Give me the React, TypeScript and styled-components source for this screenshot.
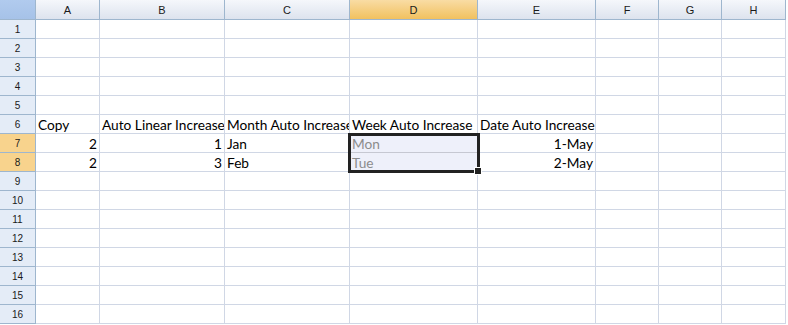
import React from "react";
import styled, { createGlobalStyle, css } from "styled-components";

const Global = createGlobalStyle`
  html, body { margin: 0; padding: 0; background: #fff; }
  body { width: 788px; height: 325px; overflow: hidden; }
`;

const COLS = [64, 125, 125, 128, 118, 63, 63, 64];
const LETTERS = ["A", "B", "C", "D", "E", "F", "G", "H"];
const ROWS = 16;
const SEL_COL = 3;
const SEL_ROWS = [7, 8];

type Cell = { t: string; right?: boolean; muted?: boolean };
const DATA: Record<number, (Cell | null)[]> = {
  6: [
    { t: "Copy" },
    { t: "Auto Linear Increase" },
    { t: "Month Auto Increase" },
    { t: "Week Auto Increase" },
    { t: "Date Auto Increase" },
  ],
  7: [
    { t: "2", right: true },
    { t: "1", right: true },
    { t: "Jan" },
    { t: "Mon", muted: true },
    { t: "1-May", right: true },
  ],
  8: [
    { t: "2", right: true },
    { t: "3", right: true },
    { t: "Feb" },
    { t: "Tue", muted: true },
    { t: "2-May", right: true },
  ],
};

const Sheet = styled.div`
  position: relative;
  display: grid;
  grid-template-columns: 36px ${COLS.map((c) => `${c}px`).join(" ")};
  grid-template-rows: 20px repeat(${ROWS}, 19px);
  width: max-content;
`;

const Corner = styled.div`
  box-sizing: border-box;
  background: linear-gradient(#b1cbee, #a6c2e8);
  border-right: 1px solid #9eb6ce;
  border-bottom: 1px solid #9eb6ce;
`;

const ColHead = styled.div<{ $sel?: boolean }>`
  box-sizing: border-box;
  display: flex;
  align-items: center;
  justify-content: center;
  font-family: "Liberation Sans", Arial, sans-serif;
  font-size: 11px;
  color: #1a1a1a;
  background: linear-gradient(#f5f7fb, #dde3ee);
  border-right: 1px solid #9eb6ce;
  border-bottom: 1px solid #9eb6ce;
  ${(p) =>
    p.$sel &&
    css`
      background: linear-gradient(#f9dca4, #f1c15f);
    `}
`;

const RowHead = styled.div<{ $sel?: boolean }>`
  box-sizing: border-box;
  display: flex;
  align-items: center;
  justify-content: center;
  font-family: "Liberation Sans", Arial, sans-serif;
  font-size: 10px;
  color: #1a1a1a;
  background: #e4ecf7;
  border-right: 1px solid #9eb6ce;
  border-bottom: 1px solid #9eb6ce;
  ${(p) =>
    p.$sel &&
    css`
      background: #f8d38d;
    `}
`;

const CellBox = styled.div<{ $right?: boolean; $muted?: boolean; $sel?: boolean }>`
  box-sizing: border-box;
  display: flex;
  align-items: flex-end;
  justify-content: ${(p) => (p.$right ? "flex-end" : "flex-start")};
  padding: 0 2px 0 2px;
  overflow: hidden;
  white-space: nowrap;
  font-family: Lato, "Liberation Sans", sans-serif;
  font-size: 13.7px;
  line-height: 17px;
  color: ${(p) => (p.$muted ? "#8c8c8c" : "#000")};
  background: ${(p) => (p.$sel ? "#eef0fa" : "#fff")};
  border-right: 1px solid #d0d7e5;
  border-bottom: 1px solid ${(p) => (p.$sel ? "#c6c8d2" : "#d0d7e5")};
`;

const Selection = styled.div`
  position: absolute;
  left: 348px;
  top: 133px;
  width: 132px;
  height: 40px;
  box-sizing: border-box;
  border: 3px solid #222;
  pointer-events: none;
`;

const Handle = styled.div`
  position: absolute;
  right: -5px;
  bottom: -5px;
  width: 6px;
  height: 6px;
  background: #222;
  border: 1px solid #fff;
`;

export default function App() {
  const rows = Array.from({ length: ROWS }, (_, i) => i + 1);
  return (
    <>
      <Global />
      <Sheet>
        <Corner />
        {LETTERS.map((l, i) => (
          <ColHead key={l} $sel={i === SEL_COL}>
            {l}
          </ColHead>
        ))}
        {rows.map((r) => (
          <React.Fragment key={r}>
            <RowHead $sel={SEL_ROWS.includes(r)}>{r}</RowHead>
            {LETTERS.map((l, ci) => {
              const c = DATA[r]?.[ci] ?? null;
              const sel = ci === SEL_COL && SEL_ROWS.includes(r);
              return (
                <CellBox key={l} $right={c?.right} $muted={c?.muted} $sel={sel}>
                  {c?.t}
                </CellBox>
              );
            })}
          </React.Fragment>
        ))}
        <Selection>
          <Handle />
        </Selection>
      </Sheet>
    </>
  );
}
